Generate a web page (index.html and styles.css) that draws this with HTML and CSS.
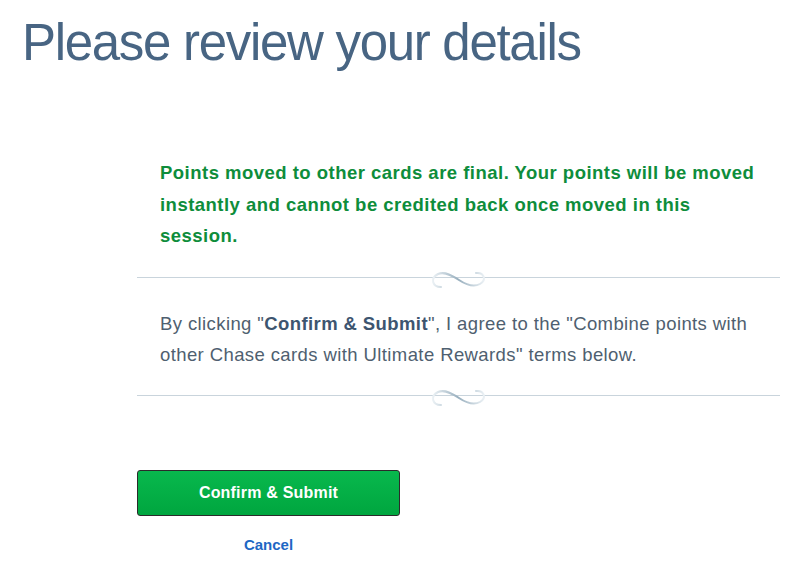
FILE: index.html
```html
<!DOCTYPE html>
<html>
<head>
<meta charset="utf-8">
<link rel="stylesheet" href="styles.css">
</head>
<body>
<h1 class="title">Please review your details</h1>
<div class="panel">
  <p class="notice">Points moved to other cards are final. Your points will be moved<br>instantly and cannot be credited back once moved in this<br>session.</p>
  <div class="divider">
    <svg class="swirl" width="60" height="22" viewBox="0 0 60 22">
      <defs>
        <linearGradient id="sg" x1="0" y1="0" x2="1" y2="0">
          <stop offset="0" stop-color="#eaf0f4"/>
          <stop offset="0.5" stop-color="#98afbe"/>
          <stop offset="1" stop-color="#eaf0f4"/>
        </linearGradient>
      </defs>
      <path d="M12 19 C3 19 1 10 9 6 C16 3 24 8 30 12 C36 16 44 20 51 16 C58 12 55 4 47 5" fill="none" stroke="url(#sg)" stroke-width="2" stroke-linecap="round"/>
    </svg>
  </div>
  <p class="terms">By clicking "<b>Confirm &amp; Submit</b>", I agree to the "Combine points with<br>other Chase cards with Ultimate Rewards" terms below.</p>
  <div class="divider second">
    <svg class="swirl" width="60" height="22" viewBox="0 0 60 22">
      <defs>
        <linearGradient id="sg2" x1="0" y1="0" x2="1" y2="0">
          <stop offset="0" stop-color="#eaf0f4"/>
          <stop offset="0.5" stop-color="#98afbe"/>
          <stop offset="1" stop-color="#eaf0f4"/>
        </linearGradient>
      </defs>
      <path d="M12 19 C3 19 1 10 9 6 C16 3 24 8 30 12 C36 16 44 20 51 16 C58 12 55 4 47 5" fill="none" stroke="url(#sg2)" stroke-width="2" stroke-linecap="round"/>
    </svg>
  </div>
  <div class="actions">
    <button class="submit" type="button">Confirm &amp; Submit</button>
    <a class="cancel" href="#">Cancel</a>
  </div>
</div>
</body>
</html>
```
FILE: styles.css
```css
html, body {
  margin: 0;
  padding: 0;
  background: #ffffff;
}
body {
  font-family: "Liberation Sans", Arial, sans-serif;
}
.title {
  margin: 0;
  padding: 14px 0 0 22px;
  font-size: 51px;
  line-height: 58px;
  font-weight: normal;
  letter-spacing: -1.3px;
  color: #486583;
}
.panel {
  margin: 85px 0 0 137px;
  width: 643px;
}
.notice {
  margin: 0;
  padding: 0 0 0 23px;
  font-size: 18.5px;
  line-height: 31.5px;
  font-weight: bold;
  letter-spacing: 0.48px;
  color: #0e8d3b;
  white-space: nowrap;
}
.divider {
  position: relative;
  height: 1px;
  background: #c9d4dc;
  margin: 25px 0 0 0;
}
.swirl {
  position: absolute;
  left: 292px;
  top: -9px;
}
.terms {
  margin: 30px 0 0 0;
  padding: 0 0 0 23px;
  font-size: 18.5px;
  line-height: 31px;
  letter-spacing: 0.4px;
  color: #4f5f70;
  white-space: nowrap;
}
.terms b {
  color: #3d5570;
}
.divider.second {
  margin-top: 25px;
}
.actions {
  margin-top: 74px;
  display: flex;
  flex-direction: column;
  align-items: flex-start;
}
.submit {
  width: 263px;
  height: 46px;
  border: 1px solid #2b2b2b;
  border-radius: 3px;
  background: linear-gradient(#08b84d, #00a63f);
  color: #ffffff;
  font-family: "Liberation Sans", Arial, sans-serif;
  font-size: 16px;
  font-weight: bold;
  letter-spacing: 0.2px;
  cursor: pointer;
}
.cancel {
  width: 263px;
  margin-top: 20px;
  text-align: center;
  font-size: 15px;
  font-weight: bold;
  color: #1e67c4;
  text-decoration: none;
}
```
